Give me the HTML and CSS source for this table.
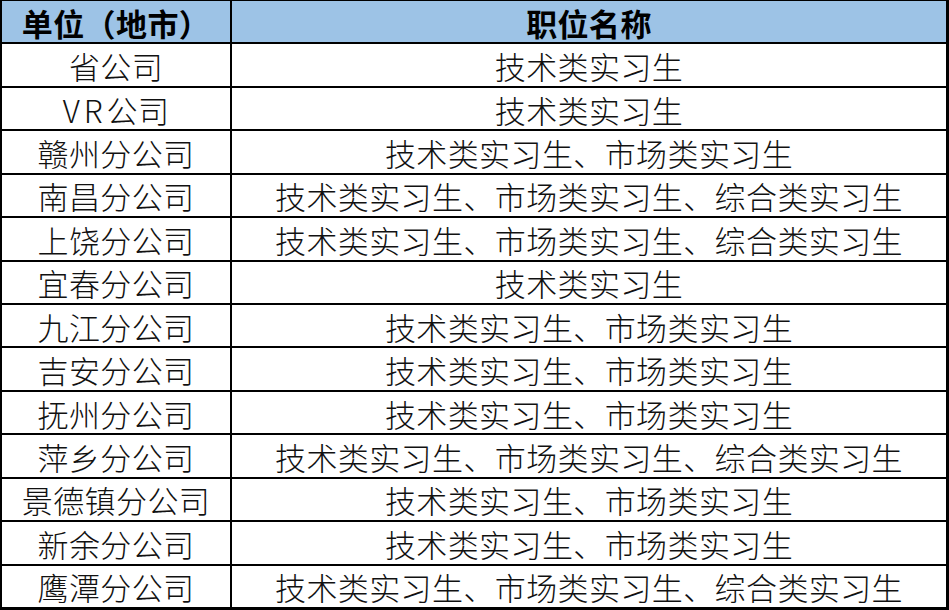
FILE: index.html
```html
<!DOCTYPE html>
<html lang="zh-CN">
<head>
<meta charset="utf-8">
<link rel="stylesheet" href="styles.css">
</head>
<body>
<div class="sheet">
  <div class="cell head">单位（地市）</div><div class="cell head">职位名称</div>
  <div class="cell">省公司</div><div class="cell">技术类实习生</div>
  <div class="cell"><span class="latin">VR</span>公司</div><div class="cell">技术类实习生</div>
  <div class="cell">赣州分公司</div><div class="cell">技术类实习生、市场类实习生</div>
  <div class="cell">南昌分公司</div><div class="cell">技术类实习生、市场类实习生、综合类实习生</div>
  <div class="cell">上饶分公司</div><div class="cell">技术类实习生、市场类实习生、综合类实习生</div>
  <div class="cell">宜春分公司</div><div class="cell">技术类实习生</div>
  <div class="cell">九江分公司</div><div class="cell">技术类实习生、市场类实习生</div>
  <div class="cell">吉安分公司</div><div class="cell">技术类实习生、市场类实习生</div>
  <div class="cell">抚州分公司</div><div class="cell">技术类实习生、市场类实习生</div>
  <div class="cell">萍乡分公司</div><div class="cell">技术类实习生、市场类实习生、综合类实习生</div>
  <div class="cell">景德镇分公司</div><div class="cell">技术类实习生、市场类实习生</div>
  <div class="cell">新余分公司</div><div class="cell">技术类实习生、市场类实习生</div>
  <div class="cell">鹰潭分公司</div><div class="cell">技术类实习生、市场类实习生、综合类实习生</div>
</div>
</body>
</html>
```
FILE: styles.css
```css
html, body {
  margin: 0;
  padding: 0;
  background: #fff;
}
.sheet {
  box-sizing: border-box;
  width: 949px;
  height: 610px;
  padding: 1px 3px 3px 2px;
  background: #000;
  display: grid;
  grid-template-columns: 228px 1fr;
  grid-template-rows: repeat(14, 1fr);
  gap: 2px;
  font-family: "Noto Sans CJK SC", sans-serif;
  font-size: 31px;
  letter-spacing: 0.4px;
  font-weight: 300;
  color: #111;
}
.cell {
  background: #fff;
  display: flex;
  align-items: center;
  justify-content: center;
  white-space: nowrap;
  line-height: 1;
  padding-top: 1px;
}
.latin {
  letter-spacing: 4px;
}
.head {
  background: #9dc3e6;
  font-weight: 700;
  color: #000;
}
```
